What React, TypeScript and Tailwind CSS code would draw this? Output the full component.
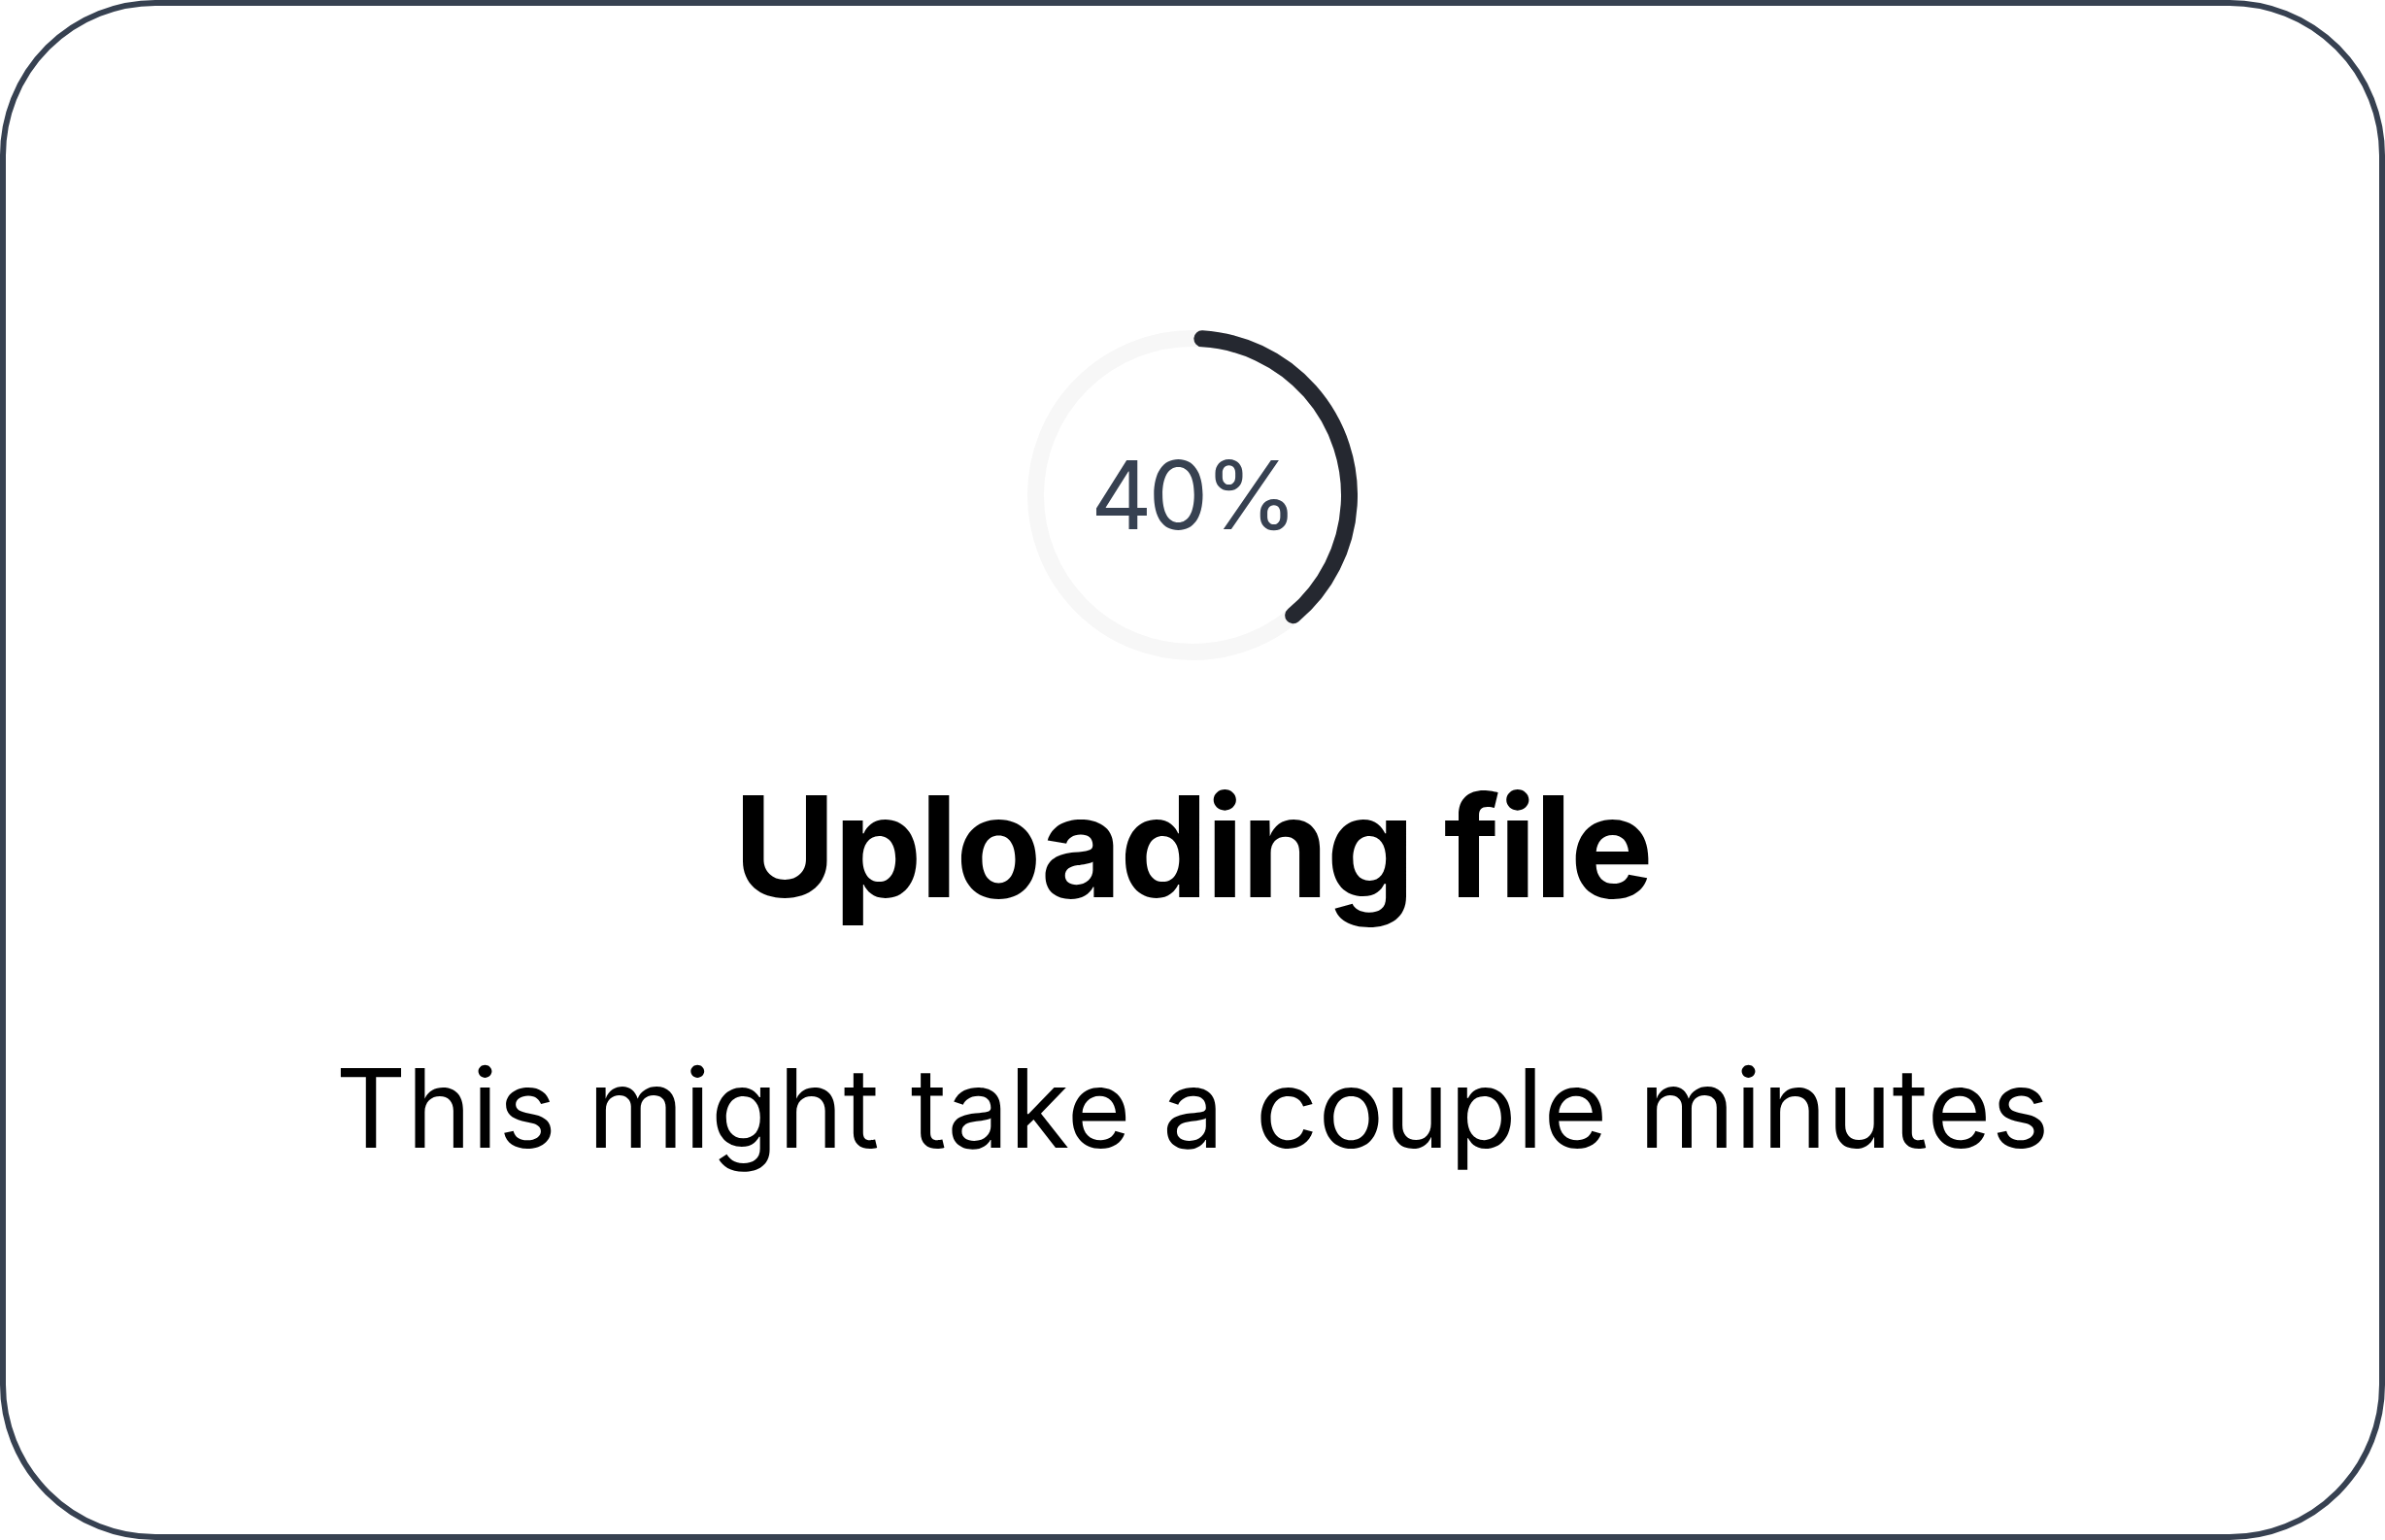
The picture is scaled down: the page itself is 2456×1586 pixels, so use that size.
import React from 'react';

const SIZE = 340;
const STROKE = 17;
const R = (SIZE - STROKE) / 2;
const C = 2 * Math.PI * R;

function ProgressRing({ percent }: { percent: number }) {
  // arc drawn from just past 12 o'clock; caps eat into the visible length
  const startDeg = 3.5;
  const sweep = percent * 360 - 7.5;
  const arcLen = (C * sweep) / 360;
  return (
    <div className="relative w-[340px] h-[340px] flex items-center justify-center">
      <svg width={SIZE} height={SIZE} className="absolute inset-0">
        <circle cx={SIZE / 2} cy={SIZE / 2} r={R} fill="none" stroke="#f7f7f7" strokeWidth={STROKE} />
        <circle
          cx={SIZE / 2}
          cy={SIZE / 2}
          r={R}
          fill="none"
          stroke="#252830"
          strokeWidth={STROKE}
          strokeLinecap="round"
          strokeDasharray={`${arcLen} ${C}`}
          transform={`rotate(${-90 + startDeg} ${SIZE / 2} ${SIZE / 2})`}
        />
      </svg>
      <span className="relative text-[98px] leading-none text-[#374151] font-normal tracking-[-0.04em]">
        {Math.round(percent * 100)}%
      </span>
    </div>
  );
}

export default function App() {
  return (
    <div
      className="w-[2456px] h-[1586px] bg-white"
      style={{ fontFamily: 'Inter, "Noto Sans", sans-serif' }}
    >
      <div className="w-full h-full border-[6px] border-[#374151] rounded-[160px] flex flex-col items-center pt-[334px]">
        <ProgressRing percent={0.4} />
        <h1 className="mt-[120px] text-[144px] leading-none font-bold text-black tracking-[-0.015em]">
          Uploading file
        </h1>
        <p className="mt-[141px] text-[113px] leading-none font-normal text-black tracking-[0.002em]">
          This might take a couple minutes
        </p>
      </div>
    </div>
  );
}
